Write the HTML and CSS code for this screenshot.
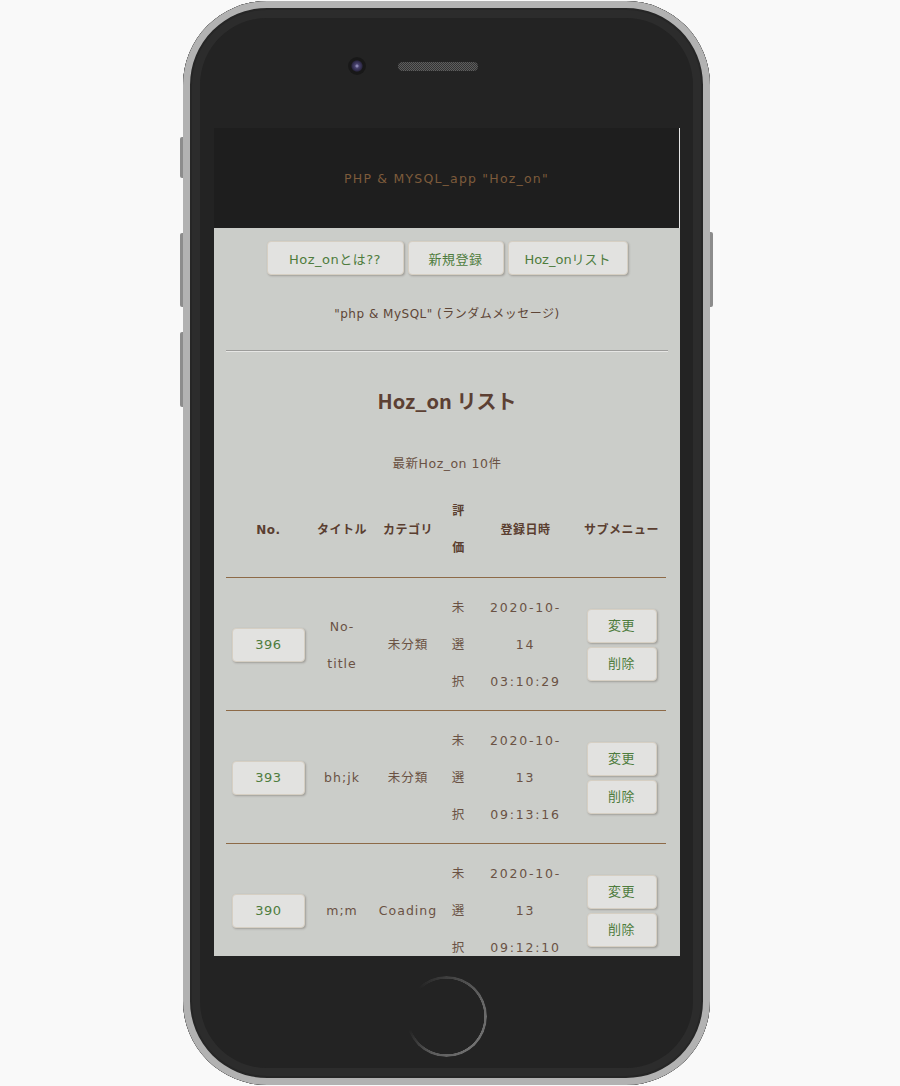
FILE: index.html
```html
<!DOCTYPE html>
<html lang="ja">
<head>
    <meta charset="UTF-8">
    <meta name="viewport" content="width=device-width, initial-scale=1.0">
    <title>Hoz_on リスト</title>
    <link rel="stylesheet" href="styles.css">
</head>
<body>
    <div class="device">
        <span class="side-btn mute"></span>
        <span class="side-btn vol-up"></span>
        <span class="side-btn vol-down"></span>
        <span class="side-btn power"></span>

        <div class="device-frame">
            <span class="camera"></span>
            <span class="speaker"></span>

            <div class="screen">
                <header class="app-header">
                    <p>PHP &amp; MYSQL_app "Hoz_on"</p>
                </header>

                <nav class="menu">
                    <a class="btn btn-about" href="#">Hoz_onとは??</a>
                    <a class="btn btn-new" href="#">新規登録</a>
                    <a class="btn btn-list" href="#">Hoz_onリスト</a>
                </nav>

                <p class="random-msg">"php &amp; MySQL" (ランダムメッセージ)</p>

                <hr class="divider">

                <h1 class="page-title">Hoz_on リスト</h1>
                <p class="page-sub">最新Hoz_on 10件</p>

                <table class="list">
                    <thead>
                        <tr>
                            <th class="col-no">No.</th>
                            <th class="col-title">タイトル</th>
                            <th class="col-cat">カテゴリ</th>
                            <th class="col-rate">評価</th>
                            <th class="col-date">登録日時</th>
                            <th class="col-menu">サブメニュー</th>
                        </tr>
                    </thead>
                    <tbody>
                        <tr>
                            <td><a class="btn btn-no" href="#">396</a></td>
                            <td class="col-title">No-title</td>
                            <td>未分類</td>
                            <td class="col-rate">未選択</td>
                            <td class="col-date">2020-10-14 03:10:29</td>
                            <td class="col-menu">
                                <a class="btn btn-sub" href="#">変更</a>
                                <a class="btn btn-sub" href="#">削除</a>
                            </td>
                        </tr>
                        <tr>
                            <td><a class="btn btn-no" href="#">393</a></td>
                            <td class="col-title">bh;jk</td>
                            <td>未分類</td>
                            <td class="col-rate">未選択</td>
                            <td class="col-date">2020-10-13 09:13:16</td>
                            <td class="col-menu">
                                <a class="btn btn-sub" href="#">変更</a>
                                <a class="btn btn-sub" href="#">削除</a>
                            </td>
                        </tr>
                        <tr>
                            <td><a class="btn btn-no" href="#">390</a></td>
                            <td class="col-title">m;m</td>
                            <td>Coading</td>
                            <td class="col-rate">未選択</td>
                            <td class="col-date">2020-10-13 09:12:10</td>
                            <td class="col-menu">
                                <a class="btn btn-sub" href="#">変更</a>
                                <a class="btn btn-sub" href="#">削除</a>
                            </td>
                        </tr>
                    </tbody>
                </table>
            </div>

            <span class="home-btn"></span>
        </div>
    </div>
</body>
</html>
```

FILE: styles.css
```css
* {
    box-sizing: border-box;
}

body {
    margin: 0;
    background: #f9f9f9;
    font-family: "DejaVu Sans", "Noto Sans CJK JP", sans-serif;
}

/* device mockup */
.device {
    position: relative;
    width: 527px;
    height: 1084px;
    margin: 1px 0 0 183px;
}

.device-frame {
    position: relative;
    height: 100%;
    padding: 127px 0 0 31px;
    background: #232323;
    border-radius: 84px;
    box-shadow:
        inset 0 0 0 7px #b2b2b2,
        inset 0 0 0 9px #262626,
        inset 0 0 0 17px #2c2c2c;
}

.side-btn {
    position: absolute;
    width: 5px;
    background: #8c8c8c;
    border-radius: 2px;
}

.mute { left: -3px; top: 136px; height: 41px; }
.vol-up { left: -3px; top: 232px; height: 74px; }
.vol-down { left: -3px; top: 331px; height: 75px; }
.power { right: -3px; top: 231px; height: 75px; }

.camera {
    position: absolute;
    left: 165px;
    top: 56px;
    width: 18px;
    height: 18px;
    border-radius: 50%;
    background: radial-gradient(circle, #8a86b0 0 1px, #4a4470 2px, #2c2845 5px, #181818 6px);
}

.speaker {
    position: absolute;
    left: 215px;
    top: 61px;
    width: 80px;
    height: 9px;
    border-radius: 5px;
    background: repeating-conic-gradient(#5e5e5e 0 25%, #333 0 50%) 0 0 / 2px 2px;
}

.home-btn {
    position: absolute;
    left: 223px;
    top: 975px;
    width: 81px;
    height: 81px;
    border-radius: 50%;
    background: conic-gradient(rgba(90, 90, 90, 0.5) 0deg, #686868 70deg, #717171 140deg, #5d5d5d 200deg, rgba(60, 60, 60, 0) 250deg, rgba(60, 60, 60, 0) 315deg, rgba(90, 90, 90, 0.5) 360deg);
    -webkit-mask: radial-gradient(circle, transparent 37.5px, #000 38px);
    mask: radial-gradient(circle, transparent 37.5px, #000 38px);
}

/* app screen */
.screen {
    width: 466px;
    height: 828px;
    overflow: hidden;
    background: #cbcdc9;
    color: #6a5244;
}

.app-header {
    display: flex;
    align-items: center;
    justify-content: center;
    height: 100px;
    background: #1e1e1e;
    border-right: 1px solid #e6e6e6;
}

.app-header p {
    margin: 0;
    color: #7d5b3b;
    font-size: 12.5px;
    letter-spacing: 1.2px;
}

.btn {
    display: inline-flex;
    align-items: center;
    justify-content: center;
    height: 34px;
    background: #e2e2e0;
    border: 1px solid #d6cfc3;
    border-radius: 4px;
    box-shadow: 1px 1px 2px rgba(60, 50, 40, 0.3);
    color: #4e7c3d;
    font-size: 13px;
    letter-spacing: 0.5px;
    text-decoration: none;
}

.menu {
    display: flex;
    justify-content: center;
    gap: 4px;
    margin-top: 13px;
}

.btn-about { width: 137px; }
.btn-new { width: 96px; }
.btn-list { width: 120px; letter-spacing: 0; }

.random-msg {
    margin: 29px 0 0;
    line-height: 20px;
    text-align: center;
    font-size: 12px;
    letter-spacing: 0.5px;
    color: #5e4536;
}

.divider {
    height: 0;
    margin: 26px 12px 0;
    border: none;
    border-top: 1px solid #9d9d9b;
    border-bottom: 1px solid #e6e6e4;
}

.page-title {
    margin: 34px 0 0;
    line-height: 30px;
    text-align: center;
    font-family: "Noto Sans CJK JP", sans-serif;
    font-size: 20px;
    font-weight: bold;
    color: #5c4033;
}

.page-sub {
    margin: 38px 0 0;
    line-height: 20px;
    text-align: center;
    font-size: 12.5px;
    letter-spacing: 0.5px;
}

/* list table */
.list {
    width: 440px;
    margin: 8px 12px 0;
    border-collapse: collapse;
    table-layout: fixed;
}

.list th,
.list td {
    padding: 11px 4px 10px;
    line-height: 37px;
    text-align: center;
    border-bottom: 1px solid #8d6a47;
}

.list th {
    font-size: 12px;
    font-weight: bold;
    color: #5a3e30;
    letter-spacing: 0.5px;
}

.list td {
    font-size: 12.5px;
    letter-spacing: 1px;
}

.col-no { width: 85px; }
.col-title { width: 62px; }
.col-cat { width: 70px; }
.col-rate { width: 31px; }
.col-date { width: 103px; }
.col-menu { width: 89px; }

.list td.col-title {
    padding-left: 6px;
    padding-right: 6px;
}

.list .col-rate {
    padding-left: 5px;
    padding-right: 5px;
}

.list td.col-date {
    padding-left: 12px;
    padding-right: 12px;
    letter-spacing: 1.8px;
}

.btn-no {
    width: 73px;
}

.col-menu .btn-sub {
    display: flex;
    width: 70px;
    margin: 0 auto;
}

.col-menu .btn-sub + .btn-sub {
    margin-top: 4px;
}
```
